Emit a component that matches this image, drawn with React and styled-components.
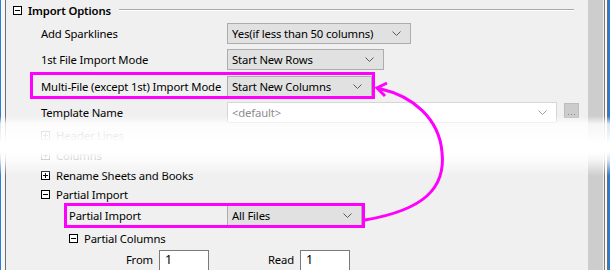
import React from "react";
import styled, { createGlobalStyle, css } from "styled-components";

const GlobalStyle = createGlobalStyle`
  html, body {
    margin: 0;
    padding: 0;
    background: #f0f0f0;
  }
  body {
    font-family: "Noto Sans", "Liberation Sans", sans-serif;
    font-size: 11.3px;
    letter-spacing: -0.15px;
    color: #000;
  }
`;

const Page = styled.div`
  position: relative;
  width: 610px;
  height: 270px;
  overflow: hidden;
  display: flex;
  background: #f0f0f0;
`;

const LeftEdge = styled.div`
  width: 6px;
  flex: none;
  background: linear-gradient(
    to right,
    #2b7cd3 0 1px,
    #f7f7f7 1px 5px,
    #6e6e6e 5px 6px
  );
`;

const Content = styled.div`
  flex: 1;
  display: flex;
  flex-direction: column;
  padding-right: 8px;
`;

const Scrollbar = styled.div`
  width: 15px;
  flex: none;
  background: #cdcdcd;
`;

const RightEdge = styled.div`
  width: 7px;
  flex: none;
  background: linear-gradient(
    to right,
    #f0f0f0 0 1px,
    #7a7a7a 1px 2px,
    #fafafa 2px 4px,
    #6e6e6e 4px 5px,
    #2b7cd3 5px 7px
  );
`;

const GroupHeader = styled.div`
  height: 18px;
  display: flex;
  align-items: center;
  padding: 2px 6px 0 7px;
  gap: 6px;
`;

const GroupTitle = styled.span`
  font-weight: 600;
  white-space: nowrap;
`;

const GroupLine = styled.div`
  flex: 1;
  height: 1px;
  margin-top: -3px;
  margin-left: 2px;
  background: #a9a9a9;
  box-shadow: 0 1px 0 #fff;
`;

const ToggleBox = styled.span`
  position: relative;
  flex: none;
  width: 9px;
  height: 9px;
  box-sizing: border-box;
  border: 1px solid #000;
  background: #fff;
  &::before {
    content: "";
    position: absolute;
    left: 1px;
    right: 1px;
    top: 3px;
    height: 1px;
    background: #000;
  }
  ${(p) =>
    p.plus &&
    css`
      &::after {
        content: "";
        position: absolute;
        top: 1px;
        bottom: 1px;
        left: 3px;
        width: 1px;
        background: #000;
      }
    `}
`;

const PropRow = styled.div`
  position: relative;
  height: ${(p) => p.h || 27}px;
  display: flex;
  align-items: center;
  padding-left: ${(p) => p.indent || 35}px;
`;

const Label = styled.span`
  width: ${(p) => p.w || 186}px;
  flex: none;
  white-space: nowrap;
`;

const Highlight = styled.div`
  position: absolute;
  box-sizing: border-box;
  left: ${(p) => p.l}px;
  width: ${(p) => p.w}px;
  top: ${(p) => p.t}px;
  bottom: ${(p) => p.b}px;
  border: 3px solid #ff00ff;
  pointer-events: none;
`;

const Select = styled.div`
  width: ${(p) => p.w}px;
  height: 21px;
  box-sizing: border-box;
  display: flex;
  align-items: center;
  justify-content: space-between;
  padding: 0 9px 0 4px;
  border: 1px solid ${(p) => (p.disabled ? "#d6d6d6" : "#adadad")};
  background: ${(p) => (p.disabled ? "#ffffff" : "#e1e1e1")};
  color: ${(p) => (p.disabled ? "#8c8c8c" : "#000")};
  white-space: nowrap;
`;

const Chevron = ({ color = "#5a5a5a" }) => (
  <svg width="9" height="5" viewBox="0 0 9 5">
    <path d="M0.5 0.5 L4.5 4.5 L8.5 0.5" fill="none" stroke={color} strokeWidth="1" />
  </svg>
);

const DotsButton = styled.div`
  width: 15px;
  height: 15px;
  margin: -4px 0 0 7px;
  box-sizing: border-box;
  border: 1px solid #bdbdbd;
  background: #cccccc;
  display: flex;
  align-items: flex-end;
  justify-content: center;
  gap: 2px;
  padding-bottom: 2px;
  & > i {
    width: 1px;
    height: 1px;
    background: #9a7f95;
  }
`;

const TreeRow = styled.div`
  height: ${(p) => p.h || 20}px;
  display: flex;
  align-items: center;
  gap: 6px;
  padding-left: ${(p) => p.indent || 35}px;
`;

const InputRow = styled.div`
  height: 20px;
  display: flex;
  align-items: flex-start;
  padding-left: 62px;
`;

const FieldLabel = styled.span`
  width: ${(p) => p.w}px;
  flex: none;
  text-align: right;
  padding-right: 6px;
  box-sizing: border-box;
  line-height: 18px;
  margin-top: 1px;
`;

const TextInput = styled.div`
  width: 50px;
  height: 20px;
  box-sizing: border-box;
  border: 1px solid #7a7a7a;
  border-bottom: none;
  background: #fff;
  padding: 0 5px;
  font-size: 12.5px;
  line-height: 18px;
`;

const Fade = styled.div`
  position: absolute;
  left: 0;
  right: 0;
  top: 116px;
  height: 60px;
  pointer-events: none;
  background: linear-gradient(
    to bottom,
    rgba(255, 255, 255, 0) 0px,
    rgba(255, 255, 255, 0.82) 8px,
    rgba(255, 255, 255, 0.9) 18px,
    rgba(255, 255, 255, 1) 27px,
    rgba(255, 255, 255, 1) 36px,
    rgba(255, 255, 255, 0.8) 44px,
    rgba(255, 255, 255, 0) 60px
  );
`;

const ArrowLayer = styled.svg`
  position: absolute;
  left: 0;
  top: 0;
  pointer-events: none;
`;

export default function App() {
  return (
    <Page>
      <GlobalStyle />
      <LeftEdge />
      <Content>
        <GroupHeader>
          <ToggleBox />
          <GroupTitle>Import Options</GroupTitle>
          <GroupLine />
        </GroupHeader>

        <PropRow>
          <Label>Add Sparklines</Label>
          <Select w={184}>
            Yes(if less than 50 columns)
            <Chevron />
          </Select>
        </PropRow>
        <PropRow>
          <Label>1st File Import Mode</Label>
          <Select w={157}>
            Start New Rows
            <Chevron />
          </Select>
        </PropRow>
        <PropRow>
          <Highlight l={24} w={345} t={-1} b={0} />
          <Label>Multi-File (except 1st) Import Mode</Label>
          <Select w={145}>
            Start New Columns
            <Chevron />
          </Select>
        </PropRow>
        <PropRow>
          <Label>Template Name</Label>
          <Select w={330} disabled>
            &lt;default&gt;
            <Chevron color="#9a9a9a" />
          </Select>
          <DotsButton>
            <i />
            <i />
            <i />
          </DotsButton>
        </PropRow>

        <TreeRow>
          <ToggleBox plus />
          <span>Header Lines</span>
        </TreeRow>
        <TreeRow>
          <ToggleBox plus />
          <span>Columns</span>
        </TreeRow>
        <TreeRow>
          <ToggleBox plus />
          <span>Rename Sheets and Books</span>
        </TreeRow>
        <TreeRow>
          <ToggleBox />
          <span>Partial Import</span>
        </TreeRow>
        <PropRow h={22} indent={63}>
          <Highlight l={58} w={301} t={-2} b={-2} />
          <Label w={158}>Partial Import</Label>
          <Select w={135}>
            All Files
            <Chevron />
          </Select>
        </PropRow>
        <TreeRow h={24} indent={63}>
          <ToggleBox />
          <span>Partial Columns</span>
        </TreeRow>
        <InputRow>
          <FieldLabel w={91}>From</FieldLabel>
          <TextInput>1</TextInput>
          <FieldLabel w={91}>Read</FieldLabel>
          <TextInput>1</TextInput>
        </InputRow>
      </Content>
      <Scrollbar />
      <RightEdge />

      <Fade />

      <ArrowLayer width="610" height="270" viewBox="0 0 610 270">
        <path
          d="M365 220 C424 210 446 188 442 152 C439 118 412 96 381 89"
          fill="none"
          stroke="#ff00ff"
          strokeWidth="3"
          strokeLinecap="round"
        />
        <path
          d="M387 83 L377 88 L385 96"
          fill="none"
          stroke="#ff00ff"
          strokeWidth="3"
          strokeLinejoin="miter"
        />
      </ArrowLayer>
    </Page>
  );
}
